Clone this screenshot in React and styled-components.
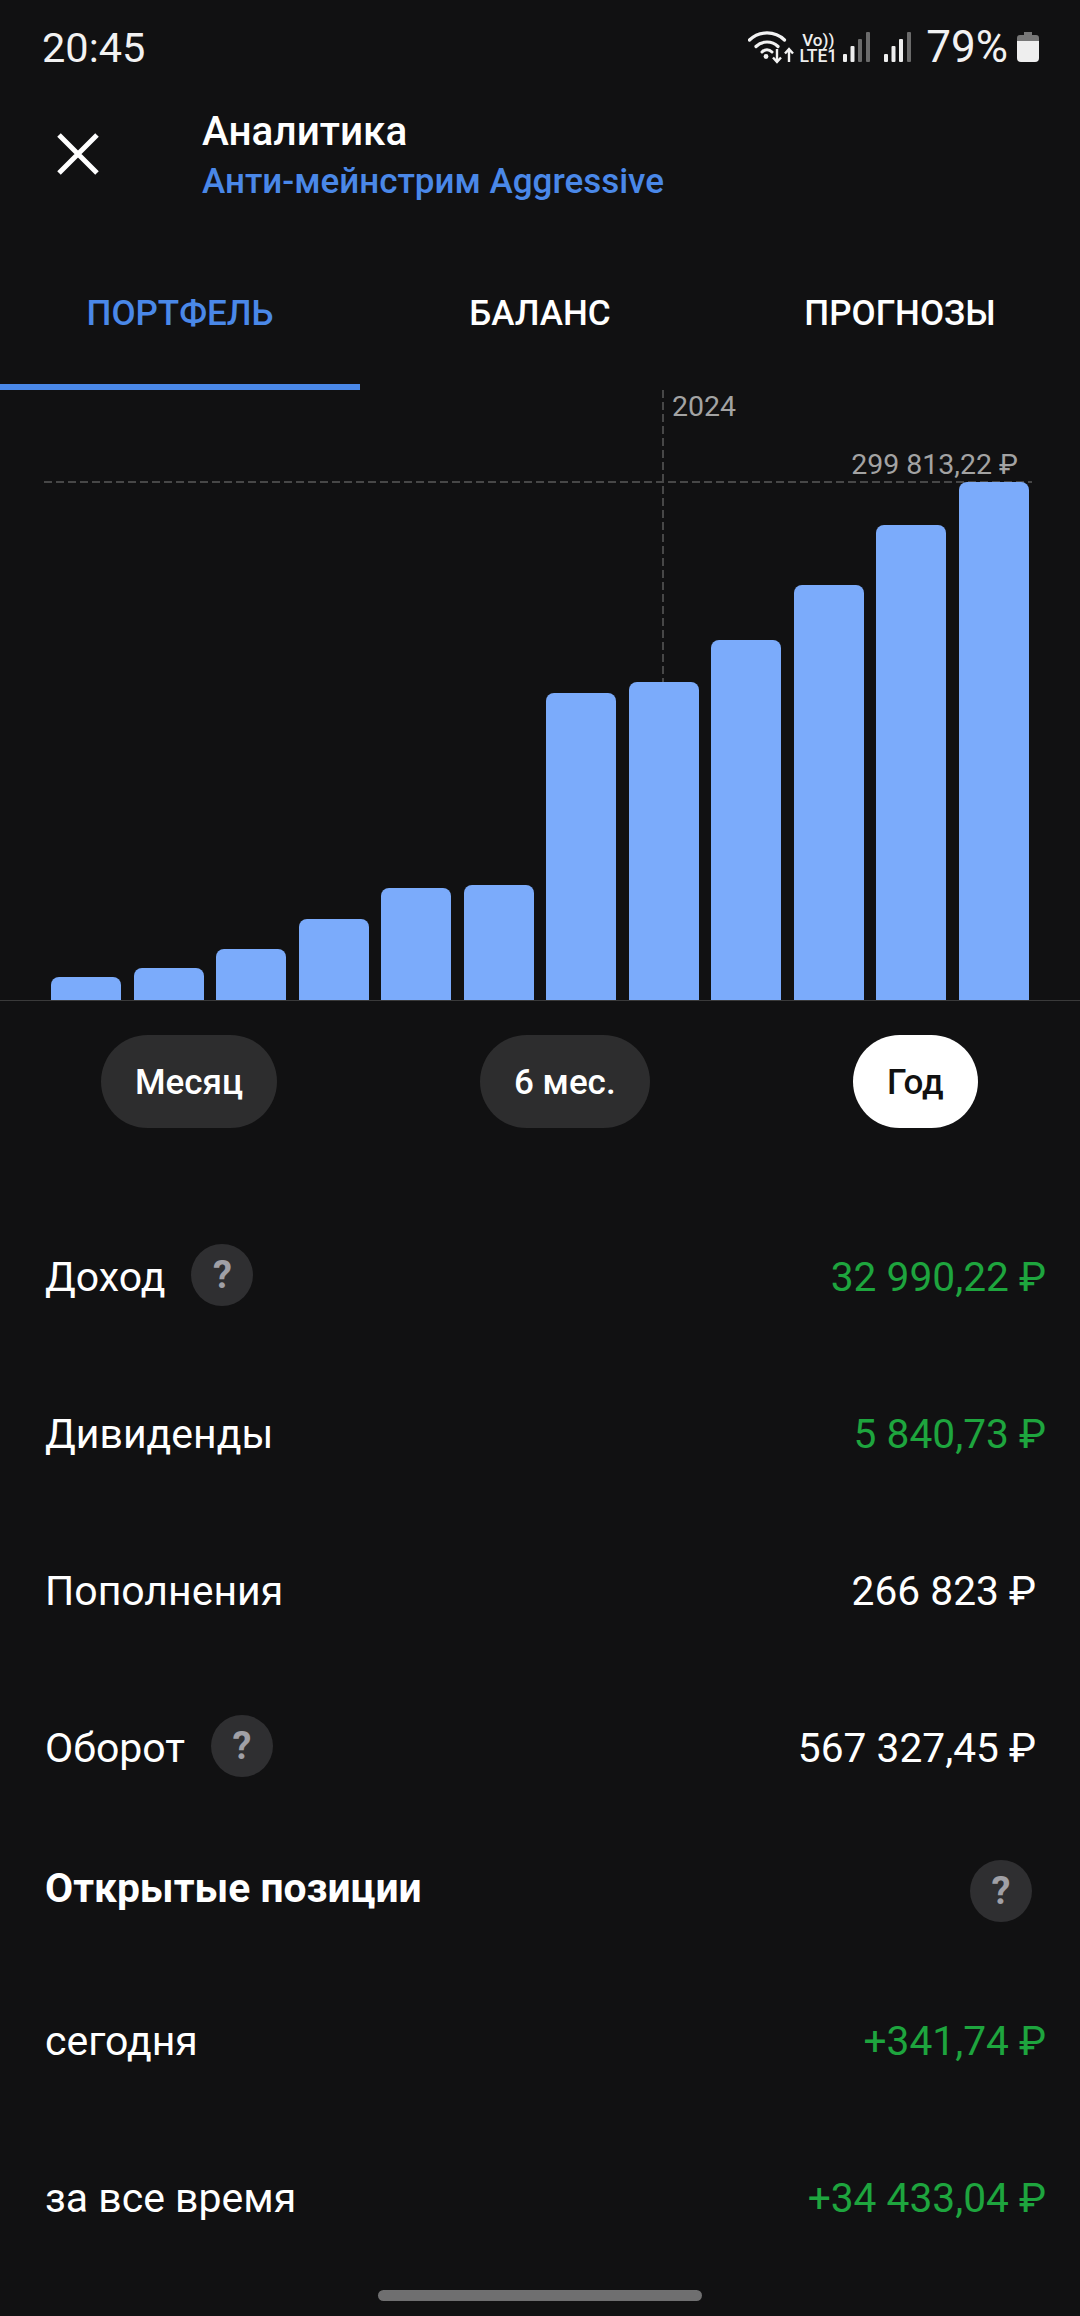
import React from "react";
import styled, { createGlobalStyle } from "styled-components";

const Global = createGlobalStyle`
  html, body { margin: 0; padding: 0; background: #111112; }
  body { font-family: Roboto, "Liberation Sans", sans-serif; color: #fff; }
  #root { width: 1080px; height: 2316px; overflow: hidden; }
`;

const Page = styled.div`
  position: relative;
  width: 1080px;
  height: 2316px;
  background: #111112;
  overflow: hidden;
`;

const StatusBar = styled.div`
  height: 94px;
  box-sizing: border-box;
  padding: 0 41px 0 42px;
  display: flex;
  align-items: center;
  justify-content: space-between;
`;
const Time = styled.span`
  font-size: 41.5px;
  line-height: 1;
  margin-top: 2px;
  color: #f2f2f2;
`;
const StatusIcons = styled.div`
  display: flex;
  align-items: center;
`;
const Net = styled.div`
  width: 38px;
  margin: 0 6px 0 5px;
  display: flex;
  flex-direction: column;
  align-items: center;
  color: #eee;
  font-weight: 500;
`;
const Vo = styled.span`
  font-size: 17px;
  line-height: 18px;
`;
const Lte = styled.span`
  font-size: 17.5px;
  line-height: 15px;
  white-space: nowrap;
`;
const Percent = styled.span`
  font-size: 44px;
  line-height: 1;
  margin: 0 9px 0 15px;
  color: #f2f2f2;
`;

const Header = styled.div`
  height: 120px;
  display: flex;
  align-items: center;
`;
const CloseBtn = styled.div`
  width: 202px;
  padding-left: 56px;
  box-sizing: border-box;
  display: flex;
`;
const HeaderText = styled.div`
  display: flex;
  flex-direction: column;
  gap: 8px;
`;
const Title = styled.div`
  font-size: 40.5px;
  line-height: 46px;
  margin-top: 1px;
  font-weight: 500;
  color: #fff;
`;
const Subtitle = styled.div`
  font-size: 35px;
  line-height: 40px;
  font-weight: 500;
  color: #4a88e8;
`;

const Tabs = styled.div`
  margin-top: 39px;
  height: 137px;
  display: flex;
`;
const Tab = styled.div`
  width: 360px;
  box-sizing: border-box;
  display: flex;
  align-items: center;
  justify-content: center;
  padding-bottom: 11px;
  font-size: 35px;
  font-weight: 500;
  color: ${(p) => (p.$active ? "#4a88e8" : "#fff")};
  border-bottom: 6px solid ${(p) => (p.$active ? "#4a88e8" : "transparent")};
`;

const Chart = styled.div`
  position: relative;
  height: 611px;
  box-sizing: border-box;
  padding-left: 51px;
  display: flex;
  align-items: flex-end;
  gap: 12.5px;
  border-bottom: 1px solid #3a3a3a;
`;
const Bar = styled.div`
  position: relative;
  width: 70px;
  background: #7babfb;
  border-radius: 8px 8px 0 0;
`;
const HLine = styled.div`
  position: absolute;
  left: 44px;
  top: 91px;
  width: 988px;
  height: 2px;
  background: repeating-linear-gradient(90deg, #474747 0 8px, transparent 8px 12px);
`;
const VLine = styled.div`
  position: absolute;
  left: 662px;
  top: 0;
  width: 2px;
  height: 292px;
  background: repeating-linear-gradient(180deg, #474747 0 8px, transparent 8px 12px);
`;
const YearLabel = styled.span`
  position: absolute;
  left: 672px;
  top: 1px;
  font-size: 28.5px;
  line-height: 32px;
  color: #a3a3a3;
`;
const MaxLabel = styled.span`
  position: absolute;
  right: 62px;
  top: 59px;
  font-size: 28.5px;
  line-height: 32px;
  color: #a3a3a3;
`;

const Periods = styled.div`
  position: relative;
  height: 197px;
`;
const Pill = styled.div`
  position: absolute;
  top: 34px;
  left: ${(p) => p.$left}px;
  height: 93px;
  box-sizing: border-box;
  padding: 2px 34px 0;
  border-radius: 47px;
  display: flex;
  align-items: center;
  font-size: 35px;
  font-weight: 500;
  background: ${(p) => (p.$active ? "#fff" : "#2d2d2e")};
  color: ${(p) => (p.$active ? "#111" : "#fff")};
`;

const Row = styled.div`
  height: 157px;
  box-sizing: border-box;
  padding: 0 ${(p) => p.$pad}px 0 45px;
  display: flex;
  align-items: center;
  justify-content: space-between;
`;
const LabelWrap = styled.div`
  display: flex;
  align-items: center;
  gap: 26px;
`;
const Label = styled.span`
  font-size: 41px;
  line-height: 48px;
  color: #fff;
`;
const Value = styled.span`
  font-size: 40.7px;
  line-height: 48px;
  color: ${(p) => (p.$green ? "#1ea53e" : "#fff")};
`;
const Help = styled.span`
  width: 62px;
  height: 62px;
  border-radius: 50%;
  background: #2f2f31;
  color: #a0a0a6;
  font-size: 38px;
  font-weight: 700;
  display: flex;
  align-items: center;
  justify-content: center;
  margin-top: -4px;
`;
const SectionHead = styled.div`
  height: 136px;
  box-sizing: border-box;
  padding: 0 48px 0 45px;
  display: flex;
  align-items: flex-start;
  justify-content: space-between;
`;
const SectionTitle = styled.span`
  margin-top: 38px;
  font-size: 40.8px;
  line-height: 48px;
  font-weight: 700;
  color: #fff;
`;
const SectionHelp = styled(Help)`
  margin-top: 34px;
`;
const HomeBar = styled.div`
  position: absolute;
  left: 378px;
  bottom: 15px;
  width: 324px;
  height: 11px;
  border-radius: 6px;
  background: #6f6f70;
`;

const Wifi = () => (
  <svg width="46" height="34" viewBox="0 0 46 34" fill="none">
    <path d="M1.5 10C11 .5 27 .5 36.5 10" stroke="#f2f2f2" strokeWidth="3.2" strokeLinecap="round" />
    <path d="M8 16.5C14 10.5 24 10.5 30 16.5" stroke="#f2f2f2" strokeWidth="3.2" strokeLinecap="round" />
    <path d="M14 22C17 19 21 19 24 22" stroke="#f2f2f2" strokeWidth="3" strokeLinecap="round" />
    <circle cx="18" cy="26.5" r="2.4" fill="#f2f2f2" />
    <path d="M29 19V32M25 27.5L29 32L33 27.5" stroke="#f2f2f2" strokeWidth="2.4" />
    <path d="M41 32V19M37 23.5L41 19L45 23.5" stroke="#f2f2f2" strokeWidth="2.4" />
  </svg>
);
const Signal = ({ style, dim }) => (
  <svg width="27" height="30" viewBox="0 0 27 30" style={style}>
    <rect x="0" y="22" width="4" height="8" rx="1" fill="#eee" />
    <rect x="7.5" y="14" width="4" height="16" rx="1" fill="#eee" />
    <rect x="15" y="7" width="4" height="23" rx="1" fill={dim ? "#6b6b6b" : "#eee"} />
    <rect x="23" y="0" width="4" height="30" rx="1" fill="#6b6b6b" />
  </svg>
);
const Battery = () => (
  <svg width="22" height="30" viewBox="0 0 22 30">
    <path d="M7 0H15V3H19A3 3 0 0 1 22 6V9H0V6A3 3 0 0 1 3 3H7Z" fill="#777" />
    <path d="M0 9H22V26A4 4 0 0 1 18 30H4A4 4 0 0 1 0 26Z" fill="#eee" />
  </svg>
);
const CloseIcon = () => (
  <svg width="44" height="44" viewBox="0 0 44 44">
    <path d="M3 3L41 41M41 3L3 41" stroke="#fff" strokeWidth="5" />
  </svg>
);

const tops = [977, 968, 949, 919, 888, 885, 693, 682, 640, 585, 525, 482];

const App = () => (
  <Page>
    <Global />
    <StatusBar>
      <Time>20:45</Time>
      <StatusIcons>
        <Wifi />
        <Net>
          <Vo>Vo))</Vo>
          <Lte>LTE1</Lte>
        </Net>
        <Signal dim />
        <Signal style={{ marginLeft: 14 }} />
        <Percent>79%</Percent>
        <Battery />
      </StatusIcons>
    </StatusBar>
    <Header>
      <CloseBtn>
        <CloseIcon />
      </CloseBtn>
      <HeaderText>
        <Title>Аналитика</Title>
        <Subtitle>Анти-мейнстрим Aggressive</Subtitle>
      </HeaderText>
    </Header>
    <Tabs>
      <Tab $active>ПОРТФЕЛЬ</Tab>
      <Tab>БАЛАНС</Tab>
      <Tab>ПРОГНОЗЫ</Tab>
    </Tabs>
    <Chart>
      <HLine />
      <VLine />
      {tops.map((t, i) => (
        <Bar key={i} style={{ height: 1000 - t }} />
      ))}
      <YearLabel>2024</YearLabel>
      <MaxLabel>299 813,22 ₽</MaxLabel>
    </Chart>
    <Periods>
      <Pill $left={101}>Месяц</Pill>
      <Pill $left={480}>6 мес.</Pill>
      <Pill $left={853} $active>Год</Pill>
    </Periods>
    <Row $pad={34}>
      <LabelWrap>
        <Label>Доход</Label>
        <Help>?</Help>
      </LabelWrap>
      <Value $green>32 990,22 ₽</Value>
    </Row>
    <Row $pad={34}>
      <Label>Дивиденды</Label>
      <Value $green>5 840,73 ₽</Value>
    </Row>
    <Row $pad={44}>
      <Label>Пополнения</Label>
      <Value>266 823 ₽</Value>
    </Row>
    <Row $pad={44}>
      <LabelWrap>
        <Label>Оборот</Label>
        <Help>?</Help>
      </LabelWrap>
      <Value>567 327,45 ₽</Value>
    </Row>
    <SectionHead>
      <SectionTitle>Открытые позиции</SectionTitle>
      <SectionHelp>?</SectionHelp>
    </SectionHead>
    <Row $pad={34}>
      <Label>сегодня</Label>
      <Value $green>+341,74 ₽</Value>
    </Row>
    <Row $pad={34}>
      <Label>за все время</Label>
      <Value $green>+34 433,04 ₽</Value>
    </Row>
    <HomeBar />
  </Page>
);

export default App;
